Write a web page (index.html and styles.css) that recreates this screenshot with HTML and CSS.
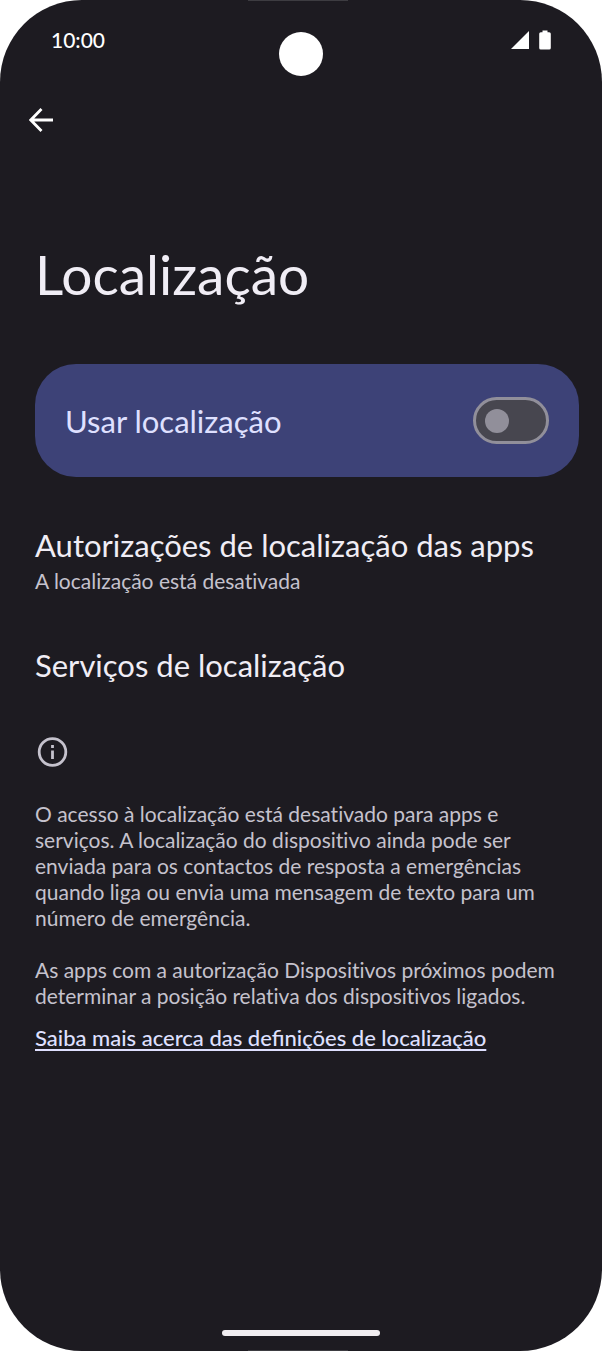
FILE: index.html
```html
<!DOCTYPE html>
<html lang="pt-PT">
<head>
<meta charset="utf-8">
<meta name="viewport" content="width=device-width, initial-scale=1">
<title>Localização</title>
<link rel="stylesheet" href="styles.css">
</head>
<body>
<div class="phone">
  <header class="status-bar">
    <time class="clock">10:00</time>
    <span class="camera"></span>
    <div class="status-icons">
      <svg width="18" height="18" viewBox="0 0 18 18" fill="currentColor" aria-hidden="true"><path d="M0 18 18 0v18z"/></svg>
      <svg width="12" height="20" viewBox="0 0 12 20" fill="currentColor" aria-hidden="true"><path d="M3.5 .500h5v1.700h1.700A1.600 1.600 0 0 1 11.800 3.800v14.200A1.600 1.600 0 0 1 10.200 19.600H1.800A1.600 1.600 0 0 1 .200 18V3.800A1.600 1.600 0 0 1 1.800 2.200h1.700z"/></svg>
    </div>
  </header>
  <nav class="toolbar">
    <button class="back" type="button" aria-label="Voltar">
      <svg width="24" height="24" viewBox="0 0 24 24" fill="none" stroke="currentColor" stroke-width="2.800" aria-hidden="true"><path d="M24 12H2M12.500 1 1.800 12l10.700 11"/></svg>
    </button>
  </nav>
  <main class="content">
    <h1 class="title">Localização</h1>
    <label class="switch-card">
      <span class="item-title">Usar localização</span>
      <input class="switch" type="checkbox" role="switch">
    </label>
    <section class="item">
      <h2 class="item-title">Autorizações de localização das apps</h2>
      <p class="item-summary">A localização está desativada</p>
    </section>
    <section class="item">
      <h2 class="item-title">Serviços de localização</h2>
    </section>
    <section class="info">
      <svg class="info-icon" width="34" height="34" viewBox="0 0 34 34" fill="none" stroke="currentColor" stroke-width="2.800" aria-hidden="true"><circle cx="17.500" cy="17" r="13.300"/><path d="M17.500 15.500v8.500M17.500 10v3"/></svg>
      <p>O acesso à localização está desativado para apps e serviços. A localização do dispositivo ainda pode ser enviada para os contactos de resposta a emergências quando liga ou envia uma mensagem de texto para um número de emergência.</p>
      <p>As apps com a autorização Dispositivos próximos podem determinar a posição relativa dos dispositivos ligados.</p>
      <a class="learn-more" href="#">Saiba mais acerca das definições de localização</a>
    </section>
  </main>
  <footer class="gesture-area"><span class="gesture-bar"></span></footer>
</div>
</body>
</html>
```
FILE: styles.css
```css
* {
  box-sizing: border-box;
}

body {
  margin: 0;
  background: #fff;
  font-family: Lato, "Noto Sans", sans-serif;
}

h1, h2, p {
  margin: 0;
  font-weight: 400;
}

p {
  font-variant-ligatures: none;
}

svg {
  display: block;
}

.phone {
  position: relative;
  display: flex;
  flex-direction: column;
  min-height: 100vh;
  overflow: hidden;
  border-radius: 82px;
  background: #1d1b21;
  color: #f0edf5;
}

.phone::before,
.phone::after {
  content: "";
  position: absolute;
  left: 50%;
  width: 100px;
  height: 1px;
  margin-left: -53px;
  background: #3d3c41;
}

.phone::before {
  top: 0;
}

.phone::after {
  bottom: 0;
}

.status-bar {
  display: grid;
  grid-template-columns: 1fr 44px 1fr;
  align-items: start;
  height: 80px;
  padding: 30px 51px 0;
  color: #fff;
}

.clock {
  font-size: 21px;
  line-height: 20px;
  font-weight: 500;
}

.camera {
  width: 44px;
  height: 44px;
  margin-top: 2px;
  border-radius: 50%;
  background: #fff;
}

.status-icons {
  display: flex;
  justify-content: flex-end;
  align-items: center;
  gap: 10px;
}

.toolbar {
  padding: 16px 17px;
}

.back {
  display: flex;
  align-items: center;
  justify-content: center;
  width: 48px;
  height: 48px;
  padding: 0;
  border: 0;
  border-radius: 50%;
  background: none;
  color: #fff;
}

.content {
  flex: 1;
  padding: 84px 23px 0 35px;
}

.title {
  font-size: 55px;
  line-height: 60px;
}

.switch-card {
  display: flex;
  align-items: center;
  justify-content: space-between;
  margin: 60px 0 50px;
  padding: 33px 30px;
  border-radius: 41px;
  background: #3d4277;
  color: #dfe0ff;
}

.item-title {
  font-size: 31px;
  line-height: 36px;
}

.switch {
  appearance: none;
  display: flex;
  align-items: center;
  width: 76px;
  height: 47px;
  margin: 0;
  padding: 0 9px;
  border: 3px solid #918f9a;
  border-radius: 24px;
  background: #47464f;
}

.switch::before {
  content: "";
  width: 24px;
  height: 24px;
  border-radius: 50%;
  background: #918f9a;
}

.switch:checked {
  justify-content: flex-end;
}

.item {
  margin-bottom: 48px;
}

.item-summary {
  font-size: 21px;
  line-height: 36px;
  color: #c5c2cd;
}

.info {
  padding-top: 4px;
  color: #c5c2cd;
  font-size: 21px;
  line-height: 26px;
}

.info-icon {
  margin-bottom: 32px;
}

.info p + p {
  margin-top: 26px;
}

.learn-more {
  display: inline-block;
  margin-top: 16px;
  color: #dfe0ff;
  font-size: 22px;
  font-weight: 500;
  text-underline-offset: 3px;
  text-decoration-thickness: 2px;
  text-decoration-skip-ink: none;
}

.gesture-area {
  display: flex;
  justify-content: center;
  padding-bottom: 15px;
}

.gesture-bar {
  width: 158px;
  height: 6px;
  border-radius: 3px;
  background: #f0edf0;
}
```
